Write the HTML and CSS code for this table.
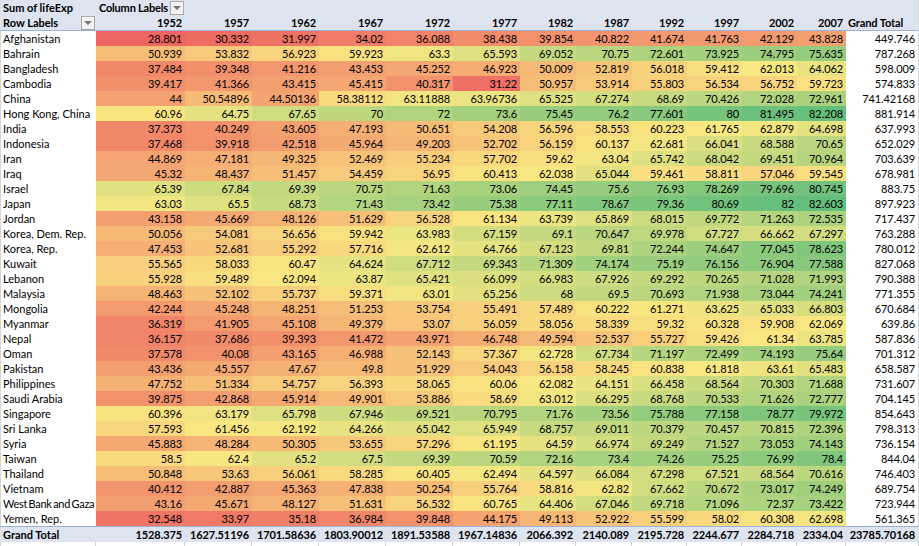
FILE: index.html
```html
<!DOCTYPE html>
<html lang="en">
<head>
<meta charset="utf-8">
<title>Pivot – Sum of lifeExp</title>
<link rel="stylesheet" href="styles.css">
</head>
<body>
<table class="pivot">
<colgroup>
<col class="c-lbl"><col class="c-first"><col class="c-wide"><col class="c-wide"><col class="c-wide"><col class="c-wide"><col class="c-wide"><col class="c-mid"><col class="c-mid"><col class="c-narrow"><col class="c-narrow"><col class="c-narrow"><col class="c-last"><col class="c-gt">
</colgroup>
<thead>
<tr class="h1">
<td class="lbl b">Sum of lifeExp</td>
<td class="hd"><div class="hcell"><span class="b tight">Column Labels</span><span class="dd"></span></div></td>
<td></td><td></td><td></td><td></td><td></td><td></td><td></td><td></td><td></td><td></td><td></td><td class="gtc"></td>
</tr>
<tr class="h2">
<td class="lbl"><div class="hcell"><span class="b">Row Labels</span><span class="dd"></span></div></td>
<td class="yr">1952</td><td class="yr">1957</td><td class="yr">1962</td><td class="yr">1967</td><td class="yr">1972</td><td class="yr">1977</td><td class="yr">1982</td><td class="yr">1987</td><td class="yr">1992</td><td class="yr">1997</td><td class="yr">2002</td><td class="yr">2007</td><td class="gth gtc">Grand Total</td>
</tr>
</thead>
<tbody>
<tr><td class="lbl">Afghanistan</td><td class="v">28.801</td><td class="v">30.332</td><td class="v">31.997</td><td class="v">34.02</td><td class="v">36.088</td><td class="v">38.438</td><td class="v">39.854</td><td class="v">40.822</td><td class="v">41.674</td><td class="v">41.763</td><td class="v">42.129</td><td class="v">43.828</td><td class="gt gtc">449.746</td></tr>
<tr><td class="lbl">Bahrain</td><td class="v">50.939</td><td class="v">53.832</td><td class="v">56.923</td><td class="v">59.923</td><td class="v">63.3</td><td class="v">65.593</td><td class="v">69.052</td><td class="v">70.75</td><td class="v">72.601</td><td class="v">73.925</td><td class="v">74.795</td><td class="v">75.635</td><td class="gt gtc">787.268</td></tr>
<tr><td class="lbl">Bangladesh</td><td class="v">37.484</td><td class="v">39.348</td><td class="v">41.216</td><td class="v">43.453</td><td class="v">45.252</td><td class="v">46.923</td><td class="v">50.009</td><td class="v">52.819</td><td class="v">56.018</td><td class="v">59.412</td><td class="v">62.013</td><td class="v">64.062</td><td class="gt gtc">598.009</td></tr>
<tr><td class="lbl">Cambodia</td><td class="v">39.417</td><td class="v">41.366</td><td class="v">43.415</td><td class="v">45.415</td><td class="v">40.317</td><td class="v">31.22</td><td class="v">50.957</td><td class="v">53.914</td><td class="v">55.803</td><td class="v">56.534</td><td class="v">56.752</td><td class="v">59.723</td><td class="gt gtc">574.833</td></tr>
<tr><td class="lbl">China</td><td class="v">44</td><td class="v">50.54896</td><td class="v">44.50136</td><td class="v">58.38112</td><td class="v">63.11888</td><td class="v">63.96736</td><td class="v">65.525</td><td class="v">67.274</td><td class="v">68.69</td><td class="v">70.426</td><td class="v">72.028</td><td class="v">72.961</td><td class="gt gtc">741.42168</td></tr>
<tr><td class="lbl">Hong Kong, China</td><td class="v">60.96</td><td class="v">64.75</td><td class="v">67.65</td><td class="v">70</td><td class="v">72</td><td class="v">73.6</td><td class="v">75.45</td><td class="v">76.2</td><td class="v">77.601</td><td class="v">80</td><td class="v">81.495</td><td class="v">82.208</td><td class="gt gtc">881.914</td></tr>
<tr><td class="lbl">India</td><td class="v">37.373</td><td class="v">40.249</td><td class="v">43.605</td><td class="v">47.193</td><td class="v">50.651</td><td class="v">54.208</td><td class="v">56.596</td><td class="v">58.553</td><td class="v">60.223</td><td class="v">61.765</td><td class="v">62.879</td><td class="v">64.698</td><td class="gt gtc">637.993</td></tr>
<tr><td class="lbl">Indonesia</td><td class="v">37.468</td><td class="v">39.918</td><td class="v">42.518</td><td class="v">45.964</td><td class="v">49.203</td><td class="v">52.702</td><td class="v">56.159</td><td class="v">60.137</td><td class="v">62.681</td><td class="v">66.041</td><td class="v">68.588</td><td class="v">70.65</td><td class="gt gtc">652.029</td></tr>
<tr><td class="lbl">Iran</td><td class="v">44.869</td><td class="v">47.181</td><td class="v">49.325</td><td class="v">52.469</td><td class="v">55.234</td><td class="v">57.702</td><td class="v">59.62</td><td class="v">63.04</td><td class="v">65.742</td><td class="v">68.042</td><td class="v">69.451</td><td class="v">70.964</td><td class="gt gtc">703.639</td></tr>
<tr><td class="lbl">Iraq</td><td class="v">45.32</td><td class="v">48.437</td><td class="v">51.457</td><td class="v">54.459</td><td class="v">56.95</td><td class="v">60.413</td><td class="v">62.038</td><td class="v">65.044</td><td class="v">59.461</td><td class="v">58.811</td><td class="v">57.046</td><td class="v">59.545</td><td class="gt gtc">678.981</td></tr>
<tr><td class="lbl">Israel</td><td class="v">65.39</td><td class="v">67.84</td><td class="v">69.39</td><td class="v">70.75</td><td class="v">71.63</td><td class="v">73.06</td><td class="v">74.45</td><td class="v">75.6</td><td class="v">76.93</td><td class="v">78.269</td><td class="v">79.696</td><td class="v">80.745</td><td class="gt gtc">883.75</td></tr>
<tr><td class="lbl">Japan</td><td class="v">63.03</td><td class="v">65.5</td><td class="v">68.73</td><td class="v">71.43</td><td class="v">73.42</td><td class="v">75.38</td><td class="v">77.11</td><td class="v">78.67</td><td class="v">79.36</td><td class="v">80.69</td><td class="v">82</td><td class="v">82.603</td><td class="gt gtc">897.923</td></tr>
<tr><td class="lbl">Jordan</td><td class="v">43.158</td><td class="v">45.669</td><td class="v">48.126</td><td class="v">51.629</td><td class="v">56.528</td><td class="v">61.134</td><td class="v">63.739</td><td class="v">65.869</td><td class="v">68.015</td><td class="v">69.772</td><td class="v">71.263</td><td class="v">72.535</td><td class="gt gtc">717.437</td></tr>
<tr><td class="lbl">Korea, Dem. Rep.</td><td class="v">50.056</td><td class="v">54.081</td><td class="v">56.656</td><td class="v">59.942</td><td class="v">63.983</td><td class="v">67.159</td><td class="v">69.1</td><td class="v">70.647</td><td class="v">69.978</td><td class="v">67.727</td><td class="v">66.662</td><td class="v">67.297</td><td class="gt gtc">763.288</td></tr>
<tr><td class="lbl">Korea, Rep.</td><td class="v">47.453</td><td class="v">52.681</td><td class="v">55.292</td><td class="v">57.716</td><td class="v">62.612</td><td class="v">64.766</td><td class="v">67.123</td><td class="v">69.81</td><td class="v">72.244</td><td class="v">74.647</td><td class="v">77.045</td><td class="v">78.623</td><td class="gt gtc">780.012</td></tr>
<tr><td class="lbl">Kuwait</td><td class="v">55.565</td><td class="v">58.033</td><td class="v">60.47</td><td class="v">64.624</td><td class="v">67.712</td><td class="v">69.343</td><td class="v">71.309</td><td class="v">74.174</td><td class="v">75.19</td><td class="v">76.156</td><td class="v">76.904</td><td class="v">77.588</td><td class="gt gtc">827.068</td></tr>
<tr><td class="lbl">Lebanon</td><td class="v">55.928</td><td class="v">59.489</td><td class="v">62.094</td><td class="v">63.87</td><td class="v">65.421</td><td class="v">66.099</td><td class="v">66.983</td><td class="v">67.926</td><td class="v">69.292</td><td class="v">70.265</td><td class="v">71.028</td><td class="v">71.993</td><td class="gt gtc">790.388</td></tr>
<tr><td class="lbl">Malaysia</td><td class="v">48.463</td><td class="v">52.102</td><td class="v">55.737</td><td class="v">59.371</td><td class="v">63.01</td><td class="v">65.256</td><td class="v">68</td><td class="v">69.5</td><td class="v">70.693</td><td class="v">71.938</td><td class="v">73.044</td><td class="v">74.241</td><td class="gt gtc">771.355</td></tr>
<tr><td class="lbl">Mongolia</td><td class="v">42.244</td><td class="v">45.248</td><td class="v">48.251</td><td class="v">51.253</td><td class="v">53.754</td><td class="v">55.491</td><td class="v">57.489</td><td class="v">60.222</td><td class="v">61.271</td><td class="v">63.625</td><td class="v">65.033</td><td class="v">66.803</td><td class="gt gtc">670.684</td></tr>
<tr><td class="lbl">Myanmar</td><td class="v">36.319</td><td class="v">41.905</td><td class="v">45.108</td><td class="v">49.379</td><td class="v">53.07</td><td class="v">56.059</td><td class="v">58.056</td><td class="v">58.339</td><td class="v">59.32</td><td class="v">60.328</td><td class="v">59.908</td><td class="v">62.069</td><td class="gt gtc">639.86</td></tr>
<tr><td class="lbl">Nepal</td><td class="v">36.157</td><td class="v">37.686</td><td class="v">39.393</td><td class="v">41.472</td><td class="v">43.971</td><td class="v">46.748</td><td class="v">49.594</td><td class="v">52.537</td><td class="v">55.727</td><td class="v">59.426</td><td class="v">61.34</td><td class="v">63.785</td><td class="gt gtc">587.836</td></tr>
<tr><td class="lbl">Oman</td><td class="v">37.578</td><td class="v">40.08</td><td class="v">43.165</td><td class="v">46.988</td><td class="v">52.143</td><td class="v">57.367</td><td class="v">62.728</td><td class="v">67.734</td><td class="v">71.197</td><td class="v">72.499</td><td class="v">74.193</td><td class="v">75.64</td><td class="gt gtc">701.312</td></tr>
<tr><td class="lbl">Pakistan</td><td class="v">43.436</td><td class="v">45.557</td><td class="v">47.67</td><td class="v">49.8</td><td class="v">51.929</td><td class="v">54.043</td><td class="v">56.158</td><td class="v">58.245</td><td class="v">60.838</td><td class="v">61.818</td><td class="v">63.61</td><td class="v">65.483</td><td class="gt gtc">658.587</td></tr>
<tr><td class="lbl">Philippines</td><td class="v">47.752</td><td class="v">51.334</td><td class="v">54.757</td><td class="v">56.393</td><td class="v">58.065</td><td class="v">60.06</td><td class="v">62.082</td><td class="v">64.151</td><td class="v">66.458</td><td class="v">68.564</td><td class="v">70.303</td><td class="v">71.688</td><td class="gt gtc">731.607</td></tr>
<tr><td class="lbl">Saudi Arabia</td><td class="v">39.875</td><td class="v">42.868</td><td class="v">45.914</td><td class="v">49.901</td><td class="v">53.886</td><td class="v">58.69</td><td class="v">63.012</td><td class="v">66.295</td><td class="v">68.768</td><td class="v">70.533</td><td class="v">71.626</td><td class="v">72.777</td><td class="gt gtc">704.145</td></tr>
<tr><td class="lbl">Singapore</td><td class="v">60.396</td><td class="v">63.179</td><td class="v">65.798</td><td class="v">67.946</td><td class="v">69.521</td><td class="v">70.795</td><td class="v">71.76</td><td class="v">73.56</td><td class="v">75.788</td><td class="v">77.158</td><td class="v">78.77</td><td class="v">79.972</td><td class="gt gtc">854.643</td></tr>
<tr><td class="lbl">Sri Lanka</td><td class="v">57.593</td><td class="v">61.456</td><td class="v">62.192</td><td class="v">64.266</td><td class="v">65.042</td><td class="v">65.949</td><td class="v">68.757</td><td class="v">69.011</td><td class="v">70.379</td><td class="v">70.457</td><td class="v">70.815</td><td class="v">72.396</td><td class="gt gtc">798.313</td></tr>
<tr><td class="lbl">Syria</td><td class="v">45.883</td><td class="v">48.284</td><td class="v">50.305</td><td class="v">53.655</td><td class="v">57.296</td><td class="v">61.195</td><td class="v">64.59</td><td class="v">66.974</td><td class="v">69.249</td><td class="v">71.527</td><td class="v">73.053</td><td class="v">74.143</td><td class="gt gtc">736.154</td></tr>
<tr><td class="lbl">Taiwan</td><td class="v">58.5</td><td class="v">62.4</td><td class="v">65.2</td><td class="v">67.5</td><td class="v">69.39</td><td class="v">70.59</td><td class="v">72.16</td><td class="v">73.4</td><td class="v">74.26</td><td class="v">75.25</td><td class="v">76.99</td><td class="v">78.4</td><td class="gt gtc">844.04</td></tr>
<tr><td class="lbl">Thailand</td><td class="v">50.848</td><td class="v">53.63</td><td class="v">56.061</td><td class="v">58.285</td><td class="v">60.405</td><td class="v">62.494</td><td class="v">64.597</td><td class="v">66.084</td><td class="v">67.298</td><td class="v">67.521</td><td class="v">68.564</td><td class="v">70.616</td><td class="gt gtc">746.403</td></tr>
<tr><td class="lbl">Vietnam</td><td class="v">40.412</td><td class="v">42.887</td><td class="v">45.363</td><td class="v">47.838</td><td class="v">50.254</td><td class="v">55.764</td><td class="v">58.816</td><td class="v">62.82</td><td class="v">67.662</td><td class="v">70.672</td><td class="v">73.017</td><td class="v">74.249</td><td class="gt gtc">689.754</td></tr>
<tr><td class="lbl long">West Bank and Gaza</td><td class="v">43.16</td><td class="v">45.671</td><td class="v">48.127</td><td class="v">51.631</td><td class="v">56.532</td><td class="v">60.765</td><td class="v">64.406</td><td class="v">67.046</td><td class="v">69.718</td><td class="v">71.096</td><td class="v">72.37</td><td class="v">73.422</td><td class="gt gtc">723.944</td></tr>
<tr><td class="lbl">Yemen, Rep.</td><td class="v">32.548</td><td class="v">33.97</td><td class="v">35.18</td><td class="v">36.984</td><td class="v">39.848</td><td class="v">44.175</td><td class="v">49.113</td><td class="v">52.922</td><td class="v">55.599</td><td class="v">58.02</td><td class="v">60.308</td><td class="v">62.698</td><td class="gt gtc">561.365</td></tr>
</tbody>
<tfoot>
<tr class="tot">
<td class="lbl">Grand Total</td><td>1528.375</td><td>1627.51196</td><td>1701.58636</td><td>1803.90012</td><td>1891.53588</td><td>1967.14836</td><td>2066.392</td><td>2140.089</td><td>2195.728</td><td>2244.677</td><td>2284.718</td><td>2334.04</td><td class="gtc">23785.70168</td>
</tr>
<tr class="grid">
<td></td><td></td><td></td><td></td><td></td><td></td><td></td><td></td><td></td><td></td><td></td><td></td><td></td><td></td>
</tr>
</tfoot>
</table>
<script src="script.js"></script>
</body>
</html>
```

FILE: styles.css
```css
html, body {
  margin: 0;
  padding: 0;
  background: #ffffff;
}

body {
  font-family: Lato, "Liberation Sans", sans-serif;
  font-size: 11px;
  color: #000000;
}

.pivot {
  border-collapse: separate;
  border-spacing: 0;
  table-layout: fixed;
  width: 918px;
}

.c-lbl { width: 96px; }
.c-first { width: 89px; }
.c-wide { width: 67px; }
.c-mid { width: 56px; }
.c-narrow { width: 55px; }
.c-last { width: 49px; }
.c-gt { width: 73px; }

.pivot td {
  padding: 0 3px;
  line-height: 15px;
  height: 15px;
  white-space: nowrap;
  overflow: hidden;
  text-align: right;
  letter-spacing: -0.1px;
}

.pivot td.lbl {
  text-align: left;
  letter-spacing: 0;
}

.pivot td.long {
  letter-spacing: -0.3px;
  word-spacing: -1px;
  overflow: visible;
}

.b { font-weight: 700; }

.tight { letter-spacing: -0.2px; }

.h1 td,
.h2 td {
  background: #dde3ef;
}

.h2 td {
  border-bottom: 1px solid #9db2da;
  font-weight: 700;
}

.h1 td.hd {
  text-align: left;
  padding-right: 1px;
}

.pivot td.gth {
  text-align: left;
  padding-left: 2px;
}

.hcell {
  display: flex;
  align-items: center;
  justify-content: space-between;
  height: 15px;
}

.h2 td.lbl {
  padding-right: 1px;
}

.dd {
  flex: none;
  width: 12px;
  height: 12px;
  border: 1px solid #a9a9a9;
  background: #f3f3f3;
  display: flex;
  align-items: center;
  justify-content: center;
  box-sizing: content-box;
}

.dd::after {
  content: "";
  width: 0;
  height: 0;
  border-left: 4px solid transparent;
  border-right: 4px solid transparent;
  border-top: 4px solid #767676;
  margin-top: 1px;
}

tbody td.lbl {
  border-left: 1px solid #d6d6d6;
  padding-left: 2px;
}

.gtc {
  border-right: 1px solid #d9d9d9;
}

.tot td {
  background: #dde3ef;
  border-top: 1px solid #9db2da;
  font-weight: 700;
}

.pivot .grid td {
  height: 10px;
  line-height: 10px;
  border-right: 1px solid #d4d4d4;
  background: #ffffff;
}

.pivot .grid td:first-child {
  border-left: 1px solid #d4d4d4;
}
```

FILE: script.js
```js
(function () {
  var cells = Array.prototype.slice.call(document.querySelectorAll('td.v'));
  var vals = cells.map(function (c) { return parseFloat(c.textContent); });
  var sorted = vals.slice().sort(function (a, b) { return a - b; });
  var n = sorted.length;
  var pos = (n - 1) * 0.5;
  var lo = Math.floor(pos), hi = Math.ceil(pos);
  var mid = sorted[lo] + (sorted[hi] - sorted[lo]) * (pos - lo);
  var min = sorted[0], max = sorted[n - 1];
  var R = [238, 102, 98], Y = [250, 232, 130], G = [99, 190, 123];
  function mix(a, b, t) {
    return a.map(function (x, i) { return Math.round(x + (b[i] - x) * t); });
  }
  cells.forEach(function (c, i) {
    var v = vals[i];
    var col = v <= mid ? mix(R, Y, (v - min) / (mid - min)) : mix(Y, G, (v - mid) / (max - mid));
    c.style.backgroundColor = 'rgb(' + col.join(',') + ')';
  });
})();
```
